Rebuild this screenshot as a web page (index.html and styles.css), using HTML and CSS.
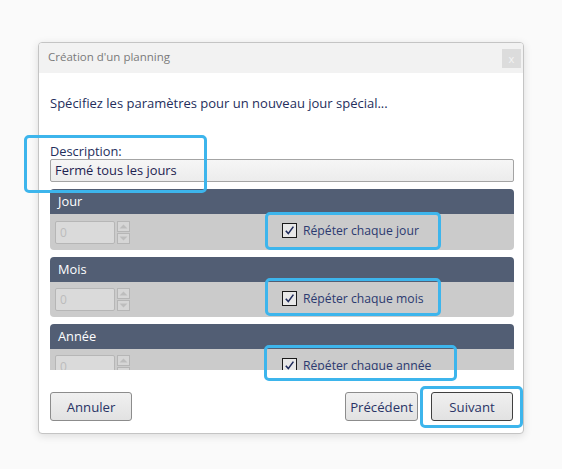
FILE: index.html
```html
<!DOCTYPE html>
<html lang="fr">
<head>
<meta charset="utf-8">
<title>Création d'un planning</title>
<link rel="stylesheet" href="styles.css">
</head>
<body>
<div class="page">
  <div class="dialog">
    <div class="titlebar">
      <span class="title">Création d'un planning</span>
      <span class="close">x</span>
    </div>
    <div class="content">
      <p class="intro">Spécifiez les paramètres pour un nouveau jour spécial...</p>
      <label class="label">Description:</label>
      <div class="textbox">Fermé tous les jours</div>
      <div class="scroller">
        <div class="section">
          <div class="sec-head">Jour</div>
          <div class="sec-body">
            <div class="spinner">
              <div class="spin-input">0</div>
              <div class="spin-btns">
                <span class="spin-btn"><svg width="9" height="5" viewBox="0 0 9 5"><path d="M0.5 4.5 L4.5 0.5 L8.5 4.5Z" fill="#bdbdbd"/></svg></span>
                <span class="spin-btn"><svg width="9" height="5" viewBox="0 0 9 5"><path d="M0.5 0.5 L4.5 4.5 L8.5 0.5Z" fill="#bdbdbd"/></svg></span>
              </div>
            </div>
            <div class="check"><span class="box"><svg width="11" height="11" viewBox="0 0 11 11"><path d="M1.8 5.8 L4.3 8.6 L9.4 1.6" fill="none" stroke="#1f2b5c" stroke-width="1.6"/></svg></span>Répéter chaque jour</div>
          </div>
        </div>
        <div class="section">
          <div class="sec-head">Mois</div>
          <div class="sec-body">
            <div class="spinner">
              <div class="spin-input">0</div>
              <div class="spin-btns">
                <span class="spin-btn"><svg width="9" height="5" viewBox="0 0 9 5"><path d="M0.5 4.5 L4.5 0.5 L8.5 4.5Z" fill="#bdbdbd"/></svg></span>
                <span class="spin-btn"><svg width="9" height="5" viewBox="0 0 9 5"><path d="M0.5 0.5 L4.5 4.5 L8.5 0.5Z" fill="#bdbdbd"/></svg></span>
              </div>
            </div>
            <div class="check"><span class="box"><svg width="11" height="11" viewBox="0 0 11 11"><path d="M1.8 5.8 L4.3 8.6 L9.4 1.6" fill="none" stroke="#1f2b5c" stroke-width="1.6"/></svg></span>Répéter chaque mois</div>
          </div>
        </div>
        <div class="section">
          <div class="sec-head">Année</div>
          <div class="sec-body">
            <div class="spinner">
              <div class="spin-input">0</div>
              <div class="spin-btns">
                <span class="spin-btn"><svg width="9" height="5" viewBox="0 0 9 5"><path d="M0.5 4.5 L4.5 0.5 L8.5 4.5Z" fill="#bdbdbd"/></svg></span>
                <span class="spin-btn"><svg width="9" height="5" viewBox="0 0 9 5"><path d="M0.5 0.5 L4.5 4.5 L8.5 0.5Z" fill="#bdbdbd"/></svg></span>
              </div>
            </div>
            <div class="check"><span class="box"><svg width="11" height="11" viewBox="0 0 11 11"><path d="M1.8 5.8 L4.3 8.6 L9.4 1.6" fill="none" stroke="#1f2b5c" stroke-width="1.6"/></svg></span>Répéter chaque année</div>
          </div>
        </div>
      </div>
      <div class="footer">
        <button class="btn btn-cancel">Annuler</button>
        <div class="right-btns">
          <button class="btn btn-prev">Précédent</button>
          <button class="btn btn-next">Suivant</button>
        </div>
      </div>
    </div>
    <div class="hl hl-desc"></div>
    <div class="hl hl-jour"></div>
    <div class="hl hl-mois"></div>
    <div class="hl hl-annee"></div>
    <div class="hl hl-next"></div>
  </div>
</div>
</body>
</html>
```
FILE: styles.css
```css
* { box-sizing: border-box; }
html, body { margin: 0; padding: 0; }
body {
  background: #fafafa;
  font-family: "Open Sans", "Noto Sans", sans-serif;
  font-size: 13px;
  color: #27325f;
  width: 562px;
  height: 469px;
  overflow: hidden;
}
.page { padding: 42px 0 0 38px; }
.dialog {
  position: relative;
  width: 486px;
  height: 392px;
  background: #fff;
  border: 1px solid #c4c4c4;
  border-radius: 4px;
  box-shadow: 0 2px 8px rgba(0,0,0,0.12);
  display: flex;
  flex-direction: column;
}
.titlebar {
  height: 30px;
  background: #f2f2f2;
  border-radius: 3px 3px 0 0;
  display: flex;
  align-items: flex-start;
  justify-content: space-between;
  padding: 6px 2px 0 9px;
  flex-shrink: 0;
}
.title { color: #7a7a7a; font-size: 11.5px; line-height: 16px; }
.close {
  width: 19px; height: 19px;
  background: #dcdcdc;
  color: #f4f4f4;
  font-size: 11px;
  display: flex; align-items: center; justify-content: center;
}
.content {
  flex: 1;
  display: flex;
  flex-direction: column;
  padding: 0 9px 0 11px;
}
.intro { margin: 21px 0 0 0; line-height: 18px; font-size: 13px; color: #242e5c; }
.label { display: block; margin-top: 31px; line-height: 16px; font-size: 12.8px; color: #242e5c; }
.textbox {
  height: 23px;
  border: 1px solid #a4a4a4;
  border-radius: 2px;
  background: linear-gradient(#f6f6f6, #ececec);
  padding-left: 4px;
  line-height: 21px;
  font-size: 12.9px;
  color: #1e2350;
}
.scroller {
  margin-top: 7px;
  height: 181px;
  overflow: hidden;
  display: flex;
  flex-direction: column;
  gap: 7px;
}
.section { flex-shrink: 0; }
.sec-head {
  height: 25px;
  background: #525e74;
  border-radius: 4px 4px 0 0;
  color: #fff;
  padding-left: 8px;
  line-height: 25px;
  font-size: 12.8px;
}
.sec-body {
  height: 35px;
  background: #cbcbcb;
  border-radius: 0 0 4px 4px;
  display: flex;
  align-items: center;
  padding-left: 5px;
}
.section:first-child .sec-body { height: 36px; }
.spinner { display: flex; align-items: center; gap: 2px; }
.spin-input {
  width: 60px; height: 23px;
  background: #dadada;
  border: 1px solid #b6b6b6;
  border-radius: 2px;
  color: #bcbcbc;
  padding-left: 4px;
  line-height: 21px;
  font-size: 12px;
}
.spin-btns { display: flex; flex-direction: column; gap: 1px; }
.spin-btn {
  width: 13px; height: 11px;
  background: #d6d6d6;
  border: 1px solid #b6b6b6;
  display: flex; align-items: center; justify-content: center;
}
.check {
  margin-left: 152px;
  margin-top: -3px;
  display: flex;
  align-items: center;
  color: #2c3a70;
  font-size: 12.2px;
}
.box {
  width: 15px; height: 15px;
  border: 1px solid #1a1a1a;
  background: #e8e8e8;
  margin-right: 6px;
  display: flex; align-items: center; justify-content: center;
}
.footer {
  margin-top: 22px;
  display: flex;
  justify-content: space-between;
  padding-right: 1px;
}
.right-btns { display: flex; gap: 13px; }
.btn {
  height: 29px;
  border: 1px solid #8c8c8c;
  border-radius: 3px;
  background: linear-gradient(#f0f0f0, #e2e2e2);
  font-family: "Open Sans", "Noto Sans", sans-serif;
  font-size: 13.2px;
  color: #2a3466;
  padding: 0;
}
.btn-cancel { width: 82px; }
.btn-prev { width: 73px; }
.btn-next { width: 82px; border-color: #404040; }
.hl {
  position: absolute;
  border: 3px solid #3db5ec;
  border-radius: 5px;
}
.hl-desc { left: -15px; top: 92px; width: 183px; height: 58px; }
.hl-jour { left: 226px; top: 169px; width: 176px; height: 38px; }
.hl-mois { left: 226px; top: 235px; width: 176px; height: 38px; }
.hl-annee { left: 225px; top: 302px; width: 193px; height: 36px; }
.hl-next { left: 381px; top: 343px; width: 103px; height: 42px; }
```
